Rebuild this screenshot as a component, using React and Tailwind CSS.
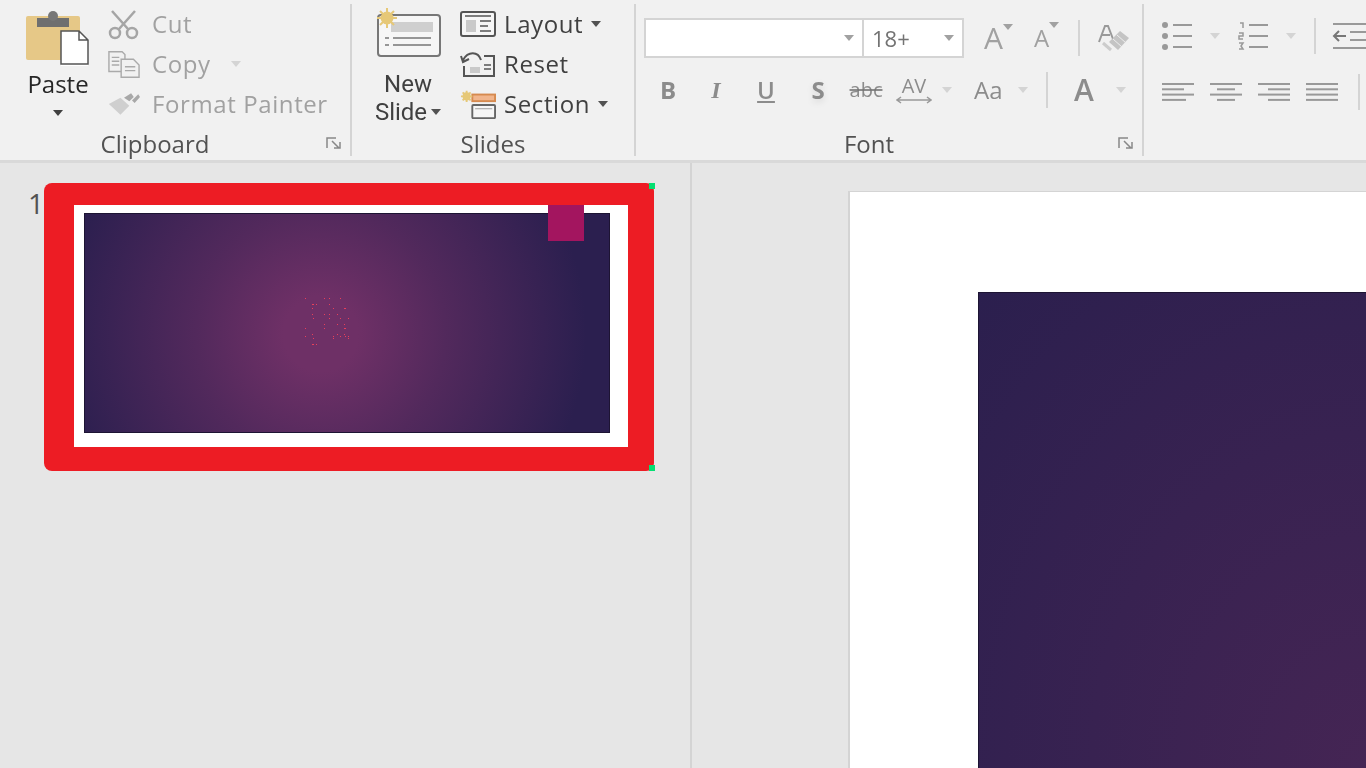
import React from 'react'

const Caret = ({ className = 'text-neutral-500' }) => (
  <svg width="10" height="6" viewBox="0 0 10 6" className={className}>
    <path d="M0 0h10L5 6z" fill="currentColor" />
  </svg>
)

const Launcher = () => (
  <svg width="16" height="14" viewBox="0 0 16 14" fill="none" stroke="#888" strokeWidth="1.5">
    <path d="M1 12V2h9" />
    <path d="M6 5l7 7M8 12h6V6" />
  </svg>
)

const Sun = ({ x, y, r }) => (
  <g stroke="#e6c877" strokeWidth="2">
    <circle cx={x} cy={y} r={r * 0.55} fill="#e6c877" />
    <path d={`M${x - r} ${y}H${x + r}M${x} ${y - r}V${y + r}M${x - r * 0.7} ${y - r * 0.7}L${x + r * 0.7} ${y + r * 0.7}M${x + r * 0.7} ${y - r * 0.7}L${x - r * 0.7} ${y + r * 0.7}`} />
  </g>
)

const PasteIcon = () => (
  <svg width="66" height="56" viewBox="0 0 66 56" fill="none">
    <rect x="1" y="6" width="54" height="44" rx="2" fill="#e6c887" />
    <path d="M12 8h32v9H12z" fill="#6f6f6f" />
    <circle cx="28" cy="6" r="5" fill="#777" />
    <path d="M36 21h19l8 9v27H36z" fill="#fff" />
    <path d="M36 21h18l9 9v24H36zM54 21v9h9" stroke="#555" strokeWidth="1.5" />
  </svg>
)

const CutIcon = () => (
  <svg width="32" height="32" viewBox="0 0 32 32" fill="none" stroke="#a5a5a5" strokeWidth="2.5">
    <circle cx="7" cy="25" r="5" />
    <circle cx="24" cy="25" r="5" />
    <path d="M11 21L27 3M20 21L4 3" />
  </svg>
)

const CopyIcon = () => (
  <svg width="34" height="30" viewBox="0 0 34 30" fill="#f1f1f1" stroke="#aaa" strokeWidth="1.5">
    <path d="M1 2h14l3 3v18H1z" />
    <path d="M4 8h8M4 12h8M4 16h8" />
    <path d="M14 10h13l6 6v13H14z" />
    <path d="M18 18h11M18 22h11" />
  </svg>
)

const BrushIcon = () => (
  <svg width="36" height="26" viewBox="0 0 36 26">
    <path d="M1 13l13-7 10 9-10 10z" fill="#cfcfcf" />
    <path d="M18 6l8-5 3 4-5 5zM27 9l7-7 2 3-6 7z" fill="#a8a8a8" />
  </svg>
)

const NewSlideIcon = () => (
  <svg width="70" height="56" viewBox="0 0 70 56" fill="none">
    <rect x="5" y="7" width="62" height="41" rx="3" fill="#f6f6f6" stroke="#777" strokeWidth="2" />
    <rect x="18" y="14" width="42" height="10" fill="#cfcfcf" />
    <path d="M12 30h4M20 30h38M12 37h4M20 37h38" stroke="#777" strokeWidth="1.5" />
    <Sun x={14} y={10} r={10} />
  </svg>
)

const LayoutIcon = () => (
  <svg width="36" height="26" viewBox="0 0 36 26" fill="#f6f6f6" stroke="#555" strokeWidth="2">
    <rect x="1" y="1" width="34" height="24" rx="2" />
    <rect x="6" y="9" width="10" height="12" fill="#c9c9c9" stroke="none" />
    <path d="M5 5h26M20 10h11M20 15h8M20 20h11" strokeWidth="1.5" />
  </svg>
)

const ResetIcon = () => (
  <svg width="36" height="28" viewBox="0 0 36 28" fill="none" stroke="#555" strokeWidth="2">
    <path d="M4 16v10h30V6H24" />
    <rect x="10" y="17" width="10" height="6" fill="#c9c9c9" stroke="none" />
    <path d="M24 19h7M24 15h7" strokeWidth="1.5" />
    <path d="M3 10c5-9 15-9 18 0M1 6l2 6 6-3" />
  </svg>
)

const SectionIcon = () => (
  <svg width="38" height="30" viewBox="0 0 38 30" fill="none">
    <rect x="13" y="5" width="24" height="7" fill="#f1b58c" stroke="#d68a4f" strokeWidth="2" />
    <rect x="13" y="16" width="24" height="14" rx="1" fill="#f6f6f6" stroke="#666" strokeWidth="2" />
    <path d="M16 20h18" stroke="#999" />
    <Sun x={7} y={7} r={6} />
  </svg>
)

const AvArrow = () => (
  <svg width="36" height="8" viewBox="0 0 36 8" fill="none" stroke="#999" strokeWidth="1.5">
    <path d="M1 4h34M5 1L1 4l4 3M31 1l4 3-4 3" />
  </svg>
)

const ClearFormat = () => (
  <svg width="34" height="28" viewBox="0 0 34 28" fill="none">
    <path d="M3 18L9 2h3l5 13M6 11h8" stroke="#999" strokeWidth="2" />
    <path d="M13 18L24 7l9 7-11 12z" fill="#c4c4c4" />
    <path d="M17 15l9 8M21 11l9 8" stroke="#eee" />
    <path d="M7 19l8 7" stroke="#ccc" strokeWidth="3" />
  </svg>
)

const ListIcon = ({ numbered }) => (
  <svg width="30" height="28" viewBox="0 0 30 28" fill="none" stroke="#999" strokeWidth="2">
    <path d="M11 3h19M11 14h19M11 25h19" />
    {numbered ? (
      <path d="M2 1h3v5M1 11h4v3H1v3h4M1 21h4l-2 3 2 3H1" strokeWidth="1.5" />
    ) : (
      <g fill="#999" stroke="none">
        <circle cx="3" cy="3" r="3" />
        <circle cx="3" cy="14" r="3" />
        <circle cx="3" cy="25" r="3" />
      </g>
    )}
  </svg>
)

const IndentIcon = () => (
  <svg width="36" height="28" viewBox="0 0 36 28" fill="none" stroke="#999" strokeWidth="2">
    <path d="M1 2h35M18 10h18M18 18h18M1 26h35" />
    <path d="M14 14H2M7 9l-5 5 5 5" stroke="#777" />
  </svg>
)

const AlignIcon = ({ lines }) => (
  <svg width="32" height="20" viewBox="0 0 32 20" stroke="#999" strokeWidth="2">
    {lines.map((l, i) => (
      <path key={i} d={`M${l[0]} ${2 + i * 5.3}H${l[1]}`} />
    ))}
  </svg>
)

const SmallRow = ({ icon, label, disabled, caret, iconBox = 'w-8' }) => (
  <div className="flex h-10 items-center">
    <div className={`${iconBox} flex shrink-0 justify-center`}>{icon}</div>
    {disabled
      ? <span className="ml-3 text-2xl tracking-wide whitespace-nowrap text-neutral-400">{label}</span>
      : <span className="ml-2 text-2xl font-medium tracking-wide whitespace-nowrap text-neutral-700">{label}</span>}
    {caret && <div className={disabled ? 'ml-5' : 'ml-2'}><Caret className={disabled ? 'text-neutral-300' : 'text-neutral-600'} /></div>}
  </div>
)

const GroupLabel = ({ children, launcher, shift }) => (
  <div className="relative flex h-7 items-center justify-center pt-1 text-2xl font-medium text-neutral-600">
    <span className={shift}>{children}</span>
    {launcher && <div className="absolute right-2 top-2"><Launcher /></div>}
  </div>
)

const Sep = () => <div className="mx-2 h-9 w-0.5 bg-neutral-300" />

const App = () => {
  const dots = []
  for (let i = 0; i < 46; i++) {
    dots.push([(i * i * 7) % 44, (i * 13 + i * i * 3) % 50])
  }

  return (
    <div className="flex h-screen flex-col overflow-hidden bg-[#e6e6e6] font-['Open_Sans',sans-serif]">
      <div className="box-content flex h-40 shrink-0 overflow-hidden border-b-3 border-[#d9d9d9] bg-[#f1f1f1] blur-[0.6px]">
        {/* clipboard */}
        <div className="my-1 flex w-88 shrink-0 flex-col border-r-2 border-neutral-300">
          <div className="flex h-32">
            <div className="ml-6 flex w-17 flex-col items-center pt-1.5">
              <PasteIcon />
              <span className="mt-0.5 text-2xl leading-8 font-medium text-neutral-800">Paste</span>
              <div className="mt-2.5"><Caret className="text-neutral-700" /></div>
            </div>
            <div className="ml-4 flex flex-col">
              <SmallRow icon={<CutIcon />} label="Cut" disabled />
              <SmallRow icon={<CopyIcon />} label="Copy" disabled caret />
              <SmallRow icon={<BrushIcon />} label="Format Painter" disabled />
            </div>
          </div>
          <GroupLabel launcher shift="pr-10">Clipboard</GroupLabel>
        </div>

        {/* slides */}
        <div className="my-1 flex w-71 shrink-0 flex-col border-r-2 border-neutral-300">
          <div className="flex h-32">
            <div className="ml-5 flex w-18 flex-col items-center pt-1 font-['Roboto',sans-serif] text-neutral-700">
              <NewSlideIcon />
              <span className="mt-1.5 text-2xl leading-7">New</span>
              <div className="flex items-center gap-1 text-2xl leading-7 whitespace-nowrap">
                Slide <Caret className="text-neutral-600" />
              </div>
            </div>
            <div className="ml-4 flex flex-col">
              <SmallRow icon={<LayoutIcon />} label="Layout" caret iconBox="w-9" />
              <SmallRow icon={<ResetIcon />} label="Reset" iconBox="w-9" />
              <SmallRow icon={<SectionIcon />} label="Section" caret iconBox="w-9" />
            </div>
          </div>
          <GroupLabel>Slides</GroupLabel>
        </div>

        {/* font */}
        <div className="my-1 flex w-127 shrink-0 flex-col border-r-2 border-neutral-300">
          <div className="flex h-32 flex-col pl-2">
            <div className="mt-3.5 flex items-center">
              <div className="flex h-10 w-55 items-center justify-end border-2 border-neutral-300 bg-white pr-2">
                <Caret className="text-neutral-400" />
              </div>
              <div className="flex h-10 w-25 items-center justify-between border-2 border-l-0 border-neutral-300 bg-white px-2 text-[22px] text-neutral-500">
                18+ <Caret className="text-neutral-400" />
              </div>
              <div className="ml-5 flex w-10 items-start text-3xl text-neutral-400">A<span className="mt-1"><Caret className="text-neutral-400" /></span></div>
              <div className="ml-2.5 flex w-9 items-start text-2xl text-neutral-400">A<span><Caret className="text-neutral-400" /></span></div>
              <Sep />
              <div className="ml-2"><ClearFormat /></div>
            </div>
            <div className="mt-3.5 flex items-center text-2xl text-neutral-500/80">
              <div className="w-12 text-center font-bold">B</div>
              <div className="w-12 text-center font-['Liberation_Serif',serif] font-bold italic">I</div>
              <div className="ml-0.5 w-12 text-center font-semibold underline">U</div>
              <div className="ml-1 w-12 text-center font-bold drop-shadow-md">S</div>
              <div className="w-12 text-center text-xl line-through">abc</div>
              <div className="flex w-12 flex-col items-center text-xl leading-5">AV<AvArrow /></div>
              <div className="ml-1 w-6"><Caret className="text-neutral-300" /></div>
              <div className="ml-2 w-9">Aa</div>
              <div className="ml-2 w-5"><Caret className="text-neutral-300" /></div>
              <Sep />
              <div className="ml-1 w-12 text-center text-3xl font-semibold">A</div>
              <div className="ml-2"><Caret className="text-neutral-300" /></div>
            </div>
          </div>
          <GroupLabel launcher shift="pr-10">Font</GroupLabel>
        </div>

        {/* paragraph */}
        <div className="my-1 flex flex-1 flex-col pl-4.5">
          <div className="mt-3 flex h-10 items-center">
            <ListIcon />
            <div className="ml-4.5"><Caret className="text-neutral-300" /></div>
            <div className="ml-4.5"><ListIcon numbered /></div>
            <div className="ml-4.5"><Caret className="text-neutral-300" /></div>
            <div className="ml-2.5"><Sep /></div>
            <div className="ml-2"><IndentIcon /></div>
          </div>
          <div className="mt-4.5 flex items-center gap-4">
            <AlignIcon lines={[[0, 32], [0, 22], [0, 32], [0, 24]]} />
            <AlignIcon lines={[[0, 32], [7, 25], [0, 32], [7, 25]]} />
            <AlignIcon lines={[[0, 32], [10, 32], [0, 32], [10, 32]]} />
            <AlignIcon lines={[[0, 32], [0, 32], [0, 32], [0, 32]]} />
            <div className="ml-1 h-9 w-0.5 bg-neutral-300" />
          </div>
        </div>
      </div>

      <div className="flex min-h-0 flex-1">
        {/* thumbnail pane */}
        <div className="flex w-[692px] shrink-0 items-start border-r-2 border-neutral-300 pt-5 pl-7 pr-9">
          <span className="w-4 text-[28px] leading-10 text-neutral-600">1</span>
          <div className="relative flex-1 rounded-lg bg-[#ed1c24] pt-5.5 pr-6.5 pb-6 pl-7.5">
            <div className="relative bg-white pt-2 pr-4.5 pb-3.5 pl-2.5">
              <div className="flex h-55 items-center justify-center border border-[#1d1433] bg-radial-[circle_at_45%_55%] from-[#6e3066] from-12% via-[#52295c] via-40% to-[#2b1f4f] to-85% pr-10">
                <svg width="44" height="50" viewBox="0 0 44 50">
                  {dots.map((d, i) => (
                    <rect key={i} x={d[0]} y={d[1]} width="1" height="1" fill="#e8405a" />
                  ))}
                </svg>
              </div>
              <div className="absolute top-0 right-11 size-9 bg-[#a3155f]" />
            </div>
            <div className="absolute top-0 -right-px size-1.5 bg-green-400" />
            <div className="absolute bottom-0 -right-px size-1.5 bg-green-400" />
          </div>
        </div>

        {/* slide editor */}
        <div className="flex min-w-0 flex-1 pt-7 pl-39">
          <div className="flex flex-1 border-t border-l-2 border-neutral-300 bg-white pt-25 pl-32">
            <div className="flex-1 border-t border-l border-[#1d1433] bg-radial-[at_100%_100%] from-[#452554] to-[#2b1f4e]" />
          </div>
        </div>
      </div>
    </div>
  )
}

export default App
